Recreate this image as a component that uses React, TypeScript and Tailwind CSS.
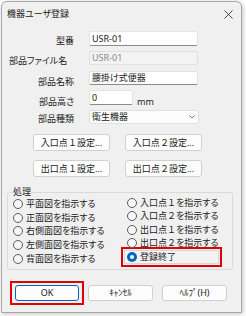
const font = "font-['Noto_Sans','Noto_Sans_CJK_JP',sans-serif] [font-feature-settings:'palt'] text-[9px] leading-[12px] text-[#1a1a1a]";

function Num({ children }: { children: string }) {
  return <span className="[font-feature-settings:normal]">{children}</span>;
}

function Radio({ label, checked }: { label: React.ReactNode; checked?: boolean }) {
  return (
    <div className="flex items-center gap-[3px] h-[13.75px]">
      {checked ? (
        <span className="flex h-[10px] w-[10px] items-center justify-center rounded-full bg-[#0067c0]">
          <span className="h-[4px] w-[4px] rounded-full bg-white" />
        </span>
      ) : (
        <span className="h-[10px] w-[10px] rounded-full border border-[#5a5a5a] bg-[#f7f7f7]" />
      )}
      <span className="whitespace-nowrap">{label}</span>
    </div>
  );
}

function Btn({ children, w, focus }: { children: string; w: string; focus?: boolean }) {
  return (
    <div
      className={
        focus
          ? `${w} flex h-[16px] items-center justify-center rounded-[3px] border border-[#0067c0] bg-[#fdfdfd]`
          : `${w} flex h-[16px] items-center justify-center rounded-[3px] border border-[#d0d0d0] bg-[#fdfdfd]`
      }
    >
      {children}
    </div>
  );
}

function SetBtn({ children }: { children: React.ReactNode }) {
  return (
    <div className="flex h-[17px] w-[77px] items-center justify-center rounded-[3px] border border-[#d0d0d0] bg-[#fdfdfd] whitespace-nowrap">
      {children}
    </div>
  );
}

export default function App() {
  return (
    <div className={`${font} h-[316px] w-[246px] bg-white`}>
      <div className="ml-[1px] mt-[1px] flex h-[312px] w-[241px] flex-col rounded-t-[6px] border border-[#a8a8a8] bg-[#f0f0f0] shadow-[1px_1px_4px_rgba(0,0,0,0.25)]">
        {/* title bar */}
        <div className="flex h-[24px] shrink-0 items-center justify-between pl-[5px] pr-[8px]">
          <span>機器ユーザ登録</span>
          <svg width="9" height="9" viewBox="0 0 9 9">
            <path d="M0.5 0.5 L8.5 8.5 M8.5 0.5 L0.5 8.5" stroke="#333" strokeWidth="0.9" />
          </svg>
        </div>

        {/* form */}
        <div className="mt-[5px] flex h-[20px] items-start">
          <div className="mt-[4px] w-[72px] text-right">型番</div>
          <div className="ml-[15px] flex h-[15px] w-[109px] items-center rounded-[2px] border border-[#e3e3e3] border-b-[#8a8a8a] bg-white pl-[2px]">USR-01</div>
        </div>
        <div className="flex h-[20px] items-start">
          <div className="mt-[4px] w-[72px] pl-[7px]">部品ファイル名</div>
          <div className="ml-[15px] flex h-[14px] w-[109px] items-center rounded-[2px] border border-[#e0e0e0] bg-[#f3f3f3] pl-[2px] text-[#8a8a8a]">USR-01</div>
        </div>
        <div className="flex h-[19px] items-start">
          <div className="mt-[5px] w-[72px] text-right">部品名称</div>
          <div className="ml-[15px] flex h-[14px] w-[109px] items-center rounded-[2px] border border-[#e3e3e3] border-b-[#8a8a8a] bg-white pl-[2px]">腰掛け式便器</div>
        </div>
        <div className="flex h-[20px] items-start">
          <div className="mt-[6px] w-[72px] text-right">部品高さ</div>
          <div className="ml-[15px] flex h-[15px] w-[44px] items-center rounded-[2px] border border-[#e3e3e3] border-b-[#8a8a8a] bg-white pl-[2px]">0</div>
          <div className="ml-[4px] mt-[6px]">mm</div>
        </div>
        <div className="flex h-[14px] items-start">
          <div className="mt-[3px] w-[72px] text-right">部品種類</div>
          <div className="ml-[15px] flex h-[14px] w-[110px] items-center justify-between rounded-[2px] border border-[#e0e0e0] bg-[#fdfdfd] pl-[2px] pr-[3px]">
            <span>衛生機器</span>
            <svg width="6" height="4" viewBox="0 0 6 4">
              <path d="M0.5 0.5 L3 3 L5.5 0.5" stroke="#555" strokeWidth="0.8" fill="none" />
            </svg>
          </div>
        </div>

        {/* setting buttons */}
        <div className="ml-[31px] mt-[10px] flex gap-[15px]">
          <SetBtn>入口点<Num>１</Num>設定...</SetBtn>
          <SetBtn>入口点<Num>２</Num>設定...</SetBtn>
        </div>
        <div className="ml-[31px] mt-[9px] flex gap-[15px]">
          <SetBtn>出口点<Num>１</Num>設定...</SetBtn>
          <SetBtn>出口点<Num>２</Num>設定...</SetBtn>
        </div>

        {/* group */}
        <fieldset className="ml-[5px] mt-[9px] h-[84px] w-[226px] rounded-[3px] border border-[#dadada] pl-[5px]">
          <legend className="leading-[12px]">処理</legend>
          <div className="flex items-start">
            <div className="mt-[-1px] w-[108px]">
              <Radio label="平面図を指示する" />
              <Radio label="正面図を指示する" />
              <Radio label="右側面図を指示する" />
              <Radio label="左側面図を指示する" />
              <Radio label="背面図を指示する" />
            </div>
            <div className="mt-[-2px] w-[101px]">
              <div className="pl-[6px]">
                <div className="h-[13.5px]"><Radio label={<>入口点<Num>１</Num>を指示する</>} /></div>
                <div className="h-[13.5px]"><Radio label={<>入口点<Num>２</Num>を指示する</>} /></div>
                <div className="h-[13.5px]"><Radio label={<>出口点<Num>１</Num>を指示する</>} /></div>
                <div className="h-[13.5px]"><Radio label={<>出口点<Num>２</Num>を指示する</>} /></div>
              </div>
              <div className="mt-[-3px] flex h-[20px] items-center border-2 border-[#e00000] p-[1px]">
                <div className="flex h-full w-full items-center border border-[#d6d6d6] bg-[#f3f3f3] pl-[2px]">
                  <Radio label="登録終了" checked />
                </div>
              </div>
            </div>
          </div>
        </fieldset>

        {/* bottom buttons */}
        <div className="ml-[8px] mt-[11px] flex items-center">
          <div className="border-2 border-[#e00000] px-[3px] py-[2px]">
            <Btn w="w-[64px]" focus>OK</Btn>
          </div>
          <div className="ml-[4px]">
            <Btn w="w-[65px]">ｷｬﾝｾﾙ</Btn>
          </div>
          <div className="ml-[9px]">
            <Btn w="w-[65px]">ﾍﾙﾌﾟ(H)</Btn>
          </div>
        </div>
      </div>
    </div>
  );
}
